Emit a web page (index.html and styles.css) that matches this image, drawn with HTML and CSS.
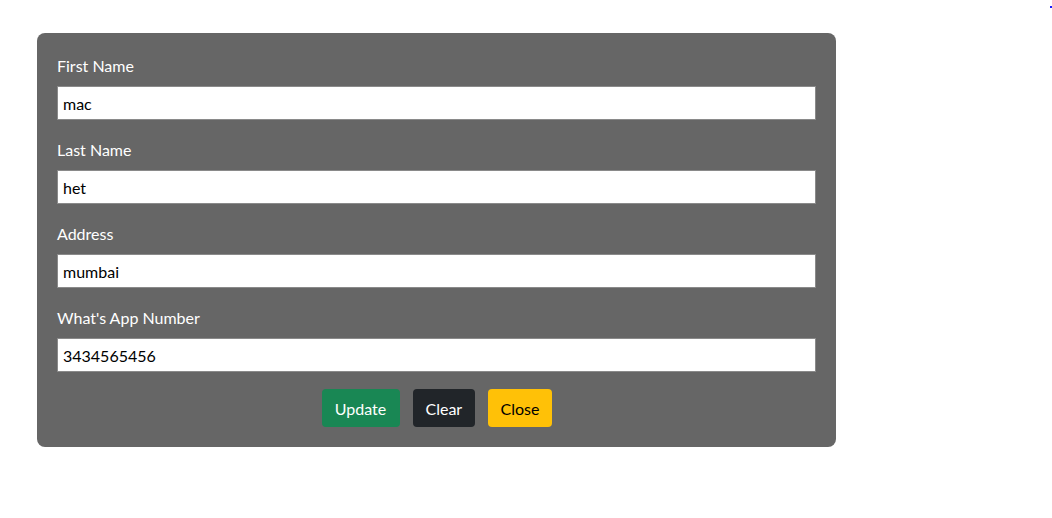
FILE: index.html
```html
<!DOCTYPE html>
<html>
<head>
<meta charset="utf-8">
<link rel="stylesheet" href="styles.css">
</head>
<body>
<span class="dot"></span>
<div class="page">
  <form class="card">
    <div class="field">
      <label class="label">First Name</label>
      <input class="input" type="text" value="mac">
    </div>
    <div class="field">
      <label class="label">Last Name</label>
      <input class="input" type="text" value="het">
    </div>
    <div class="field">
      <label class="label">Address</label>
      <input class="input" type="text" value="mumbai">
    </div>
    <div class="field">
      <label class="label">What's App Number</label>
      <input class="input" type="text" value="3434565456">
    </div>
    <div class="actions">
      <button type="button" class="btn btn-update">Update</button>
      <button type="button" class="btn btn-clear">Clear</button>
      <button type="button" class="btn btn-close">Close</button>
    </div>
  </form>
</div>
</body>
</html>
```
FILE: styles.css
```css
* { box-sizing: border-box; }
html, body { margin: 0; padding: 0; background: #fff; }
body {
  font-family: Lato, "Noto Sans", sans-serif;
  font-size: 16px;
  line-height: 24px;
  color: #212529;
  width: 1052px;
  height: 518px;
  overflow: hidden;
  position: relative;
}
.dot {
  position: absolute;
  top: 6px;
  left: 1050px;
  width: 2px;
  height: 2px;
  background: #1a1aff;
}
.page {
  padding: 33px 0 0 37px;
}
.card {
  width: 799px;
  background: #666666;
  border-radius: 8px;
  padding: 21px 20px 20px 20px;
  display: flex;
  flex-direction: column;
}
.field {
  display: flex;
  flex-direction: column;
  margin-bottom: 18px;
}
.field:nth-last-child(2) { margin-bottom: 17px; }
.label {
  color: #ffffff;
  font-size: 16px;
  line-height: 24px;
  margin: 0 0 8px 0;
}
.input {
  width: 759px;
  height: 34px;
  margin-left: 0;
  border: 1px solid #8a8a8a;
  border-radius: 0;
  background: #fff;
  font-family: Lato, "Noto Sans", sans-serif;
  font-size: 16px;
  color: #000;
  padding: 0 5px;
  outline: none;
}
.actions {
  display: flex;
  justify-content: center;
  gap: 13px;
}
.btn {
  height: 38px;
  border: none;
  border-radius: 4px;
  font-family: Lato, "Noto Sans", sans-serif;
  font-size: 16px;
  padding: 0 13px;
  cursor: pointer;
}
.btn-update { background: #198754; color: #fff; width: 78px; }
.btn-clear { background: #212529; color: #fff; width: 62px; }
.btn-close { background: #ffc107; color: #000; width: 64px; }
```
